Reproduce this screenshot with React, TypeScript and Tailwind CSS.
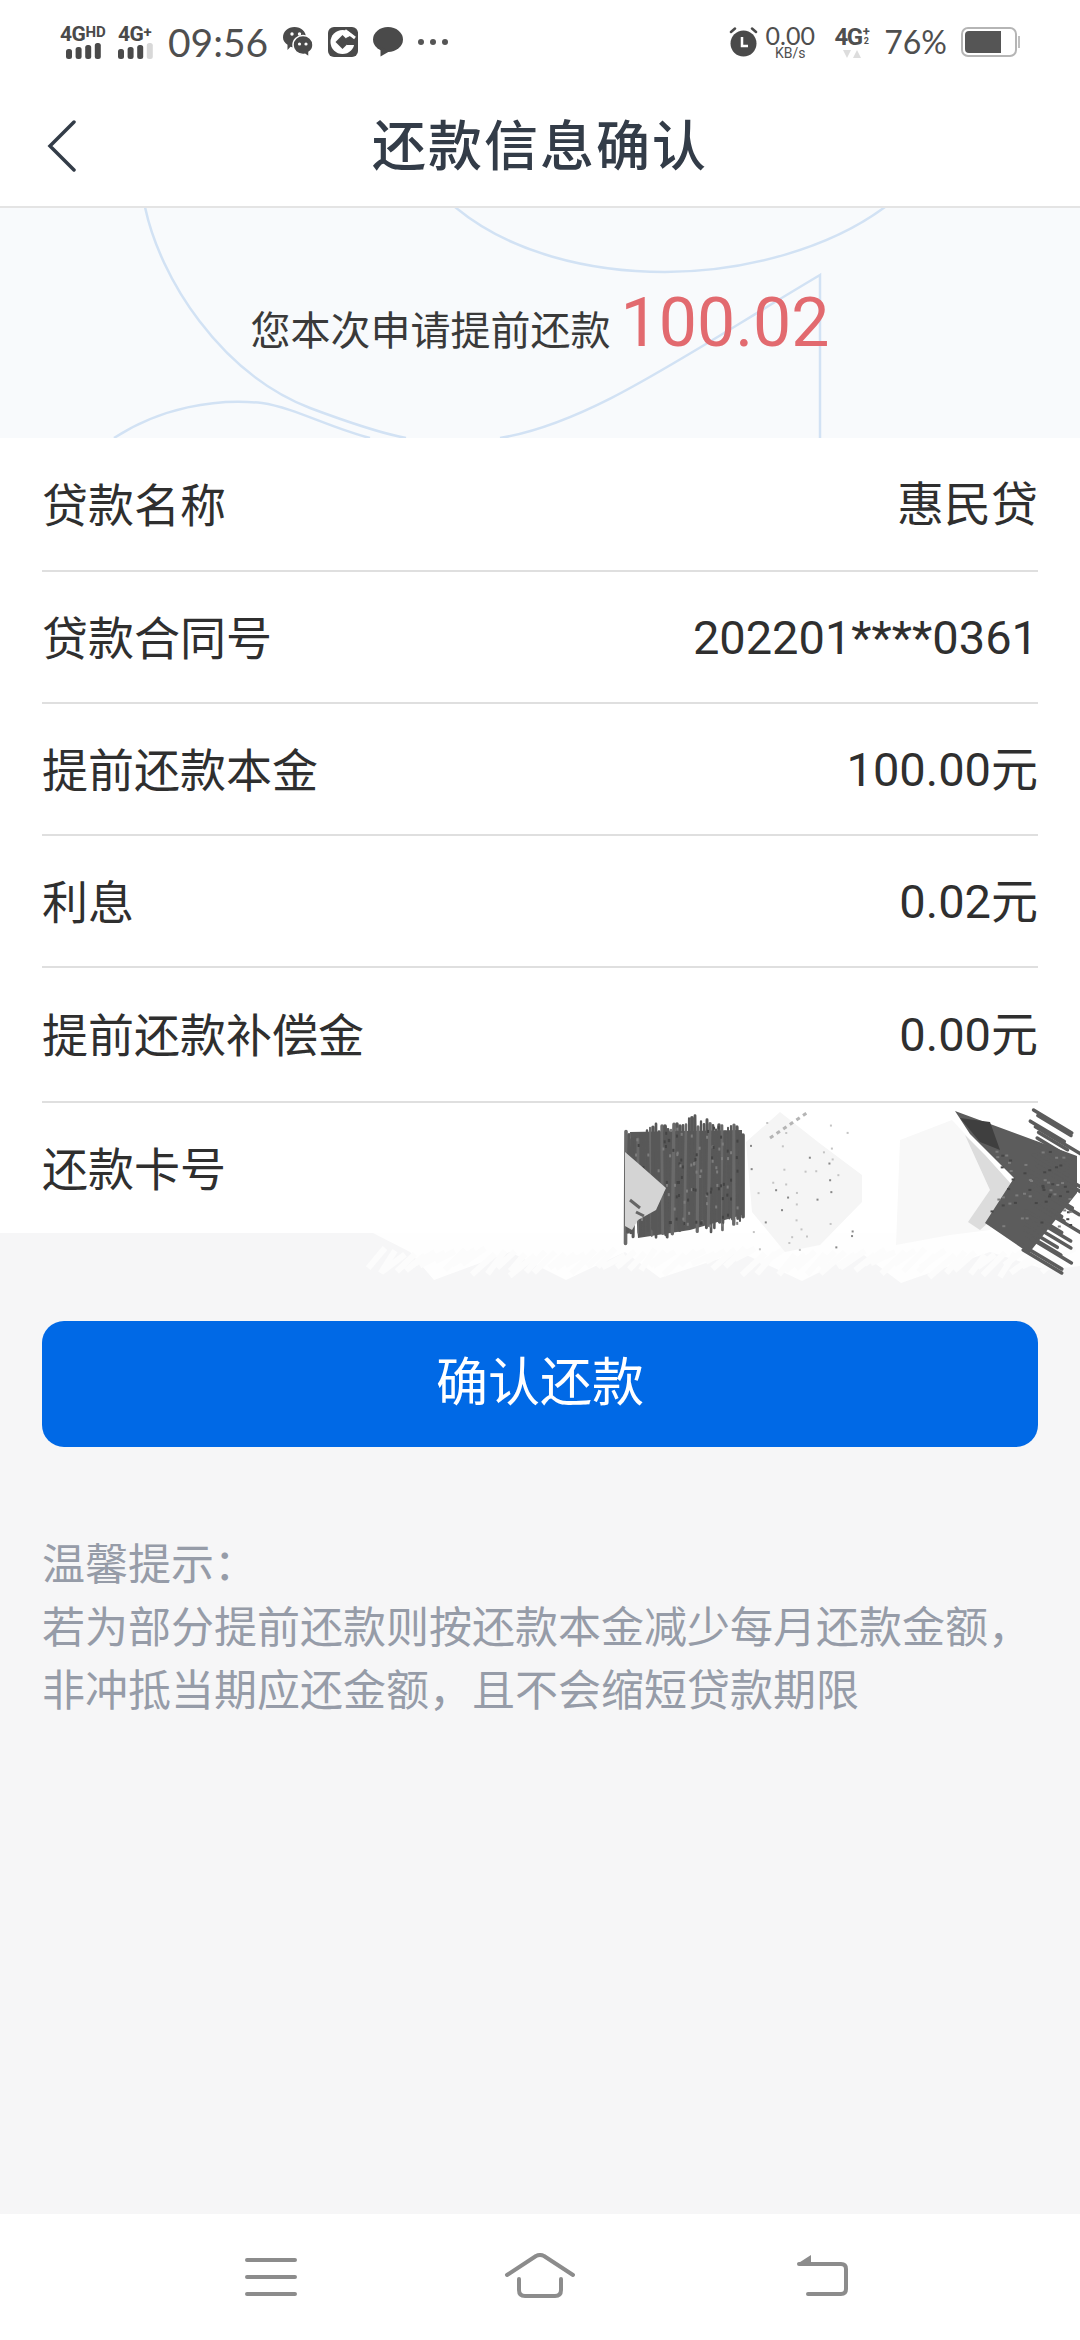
const cjk = { fontFamily: '"Noto Sans CJK SC", "Noto Sans", sans-serif' }
const num = { fontFamily: 'Roboto, "Noto Sans CJK SC", sans-serif' }
const lato = { fontFamily: 'Lato, sans-serif' }

function Signal({ level, width }: { level: number; width: number }) {
  const heights = [10, 12, 14, 16]
  return (
    <svg width={width} height="16" viewBox={`0 0 ${width} 16`}>
      {heights.map((h, i) => (
        <rect key={i} x={i * 9.6} y={16 - h} width="6" height={h} rx="2.5" fill={i < level ? '#4a4a4a' : '#d8d8d8'} />
      ))}
    </svg>
  )
}

function NetworkBadge({ suffix, level, className }: { suffix: string; level: number; className: string }) {
  return (
    <div className={`flex flex-col font-bold leading-none text-[#4a4a4a] ${className}`} style={{ fontFamily: 'Roboto, sans-serif' }}>
      <div className="flex h-[17px] items-start whitespace-nowrap">
        <span className="text-[21px] leading-[17px] tracking-[-0.5px]">4G</span>
        <span className="text-[15px] leading-[12px]">{suffix}</span>
      </div>
      <div className="flex justify-center">
        <Signal level={level} width={35} />
      </div>
    </div>
  )
}

function StatusBar() {
  return (
    <div className="flex h-[80px] items-center justify-between pt-[4px] pl-[60px] pr-[60px] text-[#4f4f4f]" style={lato}>
      <div className="flex items-center">
        <NetworkBadge suffix="HD" level={4} className="w-[46px]" />
        <NetworkBadge suffix="+" level={3} className="ml-[12px] w-[35px]" />
        <span className="ml-[15px] text-[39px] leading-[40px]">09:56</span>
        <svg className="ml-[15px]" width="30" height="30" viewBox="0 0 30 30">
          <path d="M11.5 0 C18 0 23 4.5 23 10.5 C23 16 18 20.5 11.5 20.5 C10 20.5 8.5 20.2 7.5 19.8 L4.5 23 L4.5 17.8 C1.8 16 0 13.5 0 10.5 C0 4.5 5 0 11.5 0 Z" fill="#4a4a4a" />
          <circle cx="9" cy="7" r="1.7" fill="#fff" />
          <circle cx="16.5" cy="7" r="1.7" fill="#fff" />
          <path d="M20 8.5 C25.5 8.5 30 12.5 30 18 C30 21 28.5 23.5 26 25.2 L26 30 L22 27.3 C21.3 27.5 20.7 27.5 20 27.5 C14.5 27.5 10 23.5 10 18 C10 12.5 14.5 8.5 20 8.5 Z" fill="#4a4a4a" stroke="#fff" strokeWidth="1.5" />
          <circle cx="16.5" cy="17" r="1.6" fill="#fff" />
          <circle cx="23" cy="17" r="1.6" fill="#fff" />
        </svg>
        <svg className="ml-[15px]" width="30" height="30" viewBox="0 0 30 30">
          <rect width="30" height="30" rx="6" fill="#4a4a4a" />
          <circle cx="14.5" cy="15" r="12" fill="#fff" />
          <path d="M14.5 8 L21.5 15 L14.5 22 L7.5 15 Z" fill="#4a4a4a" />
          <path d="M18 11 L30 5 V18 L19 18 Z" fill="#4a4a4a" />
          <path d="M17 3.5 L27 11" stroke="#fff" strokeWidth="3" />
        </svg>
        <svg className="ml-[15px]" width="30" height="30" viewBox="0 0 30 30">
          <ellipse cx="15" cy="12.5" rx="15" ry="12.5" fill="#4a4a4a" />
          <path d="M7.5 20 L7.5 29.5 L17 24 Z" fill="#4a4a4a" />
        </svg>
        <div className="ml-[15px] flex gap-[6px]">
          <div className="size-[6px] rounded-full bg-[#555555]" />
          <div className="size-[6px] rounded-full bg-[#555555]" />
          <div className="size-[6px] rounded-full bg-[#555555]" />
        </div>
      </div>
      <div className="flex items-center">
        <svg width="29" height="30" viewBox="0 0 29 30">
          <path d="M2 5 L6 1.5 M27 5 L23 1.5" stroke="#4a4a4a" strokeWidth="2.5" strokeLinecap="round" />
          <circle cx="14.5" cy="16.5" r="13" fill="#4a4a4a" />
          <path d="M13 10 V19 H19" fill="none" stroke="#fff" strokeWidth="2.5" />
        </svg>
        <div className="ml-[7px] flex w-[50px] flex-col items-center">
          <span className="text-[25px] leading-[21px]">0.00</span>
          <span className="text-[14px] leading-[14px]" style={{ fontFamily: 'Roboto, sans-serif' }}>KB/s</span>
        </div>
        <div className="ml-[19px] flex w-[36px] flex-col items-center" style={{ fontFamily: 'Roboto, sans-serif' }}>
          <div className="flex h-[20px] items-center whitespace-nowrap font-bold">
            <span className="text-[24px] leading-[20px] tracking-[-1.5px]">4G</span>
            <div className="ml-[1px] flex flex-col items-center">
              <span className="text-[13px] leading-[10px]">+</span>
              <span className="text-[9px] leading-[9px]">2</span>
            </div>
          </div>
          <svg width="18" height="8" viewBox="0 0 18 8" className="mt-[3px]">
            <path d="M0 0 H8 L4 8 Z M10 8 H18 L14 0 Z" fill="#dddddd" />
          </svg>
        </div>
        <span className="ml-[14px] text-[32px] leading-[34px]">76%</span>
        <div className="ml-[14px] flex items-center">
          <div className="h-[30px] w-[56px] rounded-[7px] border-2 border-[#b5b5b5] p-[2px]">
            <div className="h-full w-[36px] rounded-l-[4px] bg-[#555555]" />
          </div>
          <div className="ml-[1px] h-[12px] w-[2px] bg-[#c0c0c0]" />
        </div>
      </div>
    </div>
  )
}

function NavBar() {
  return (
    <div className="relative flex h-[128px] items-center justify-center border-b-2 border-[#e4e4e4] bg-white">
      <svg className="absolute top-[40px] left-[47px]" width="30" height="52" viewBox="0 0 30 52">
        <path d="M27 2 L3 26 L27 50" fill="none" stroke="#333c48" strokeWidth="3.5" strokeLinecap="round" />
      </svg>
      <span className="text-[54px] font-medium leading-none text-[#333c48] tracking-[2px]" style={cjk}>还款信息确认</span>
    </div>
  )
}

function Banner() {
  return (
    <div className="relative flex h-[230px] items-center justify-center overflow-hidden bg-[#f8fafc]">
      <svg className="absolute inset-0" width="1080" height="230" viewBox="0 0 1080 230" fill="none" stroke="#d2e2f4" strokeWidth="2.5">
        <path d="M145 -1 C160 70 220 165 310 200 C350 215 380 225 406 230" />
        <path d="M114 230 C160 200 215 190 262 195 C295 200 330 220 370 230" />
        <path d="M500 230 C590 215 680 150 820 67 L820 230" />
        <path d="M455 -1 C510 45 590 64 665 64 C745 64 830 40 885 -1" />
      </svg>
      <div className="relative flex items-center">
        <span className="pt-[10px] text-[40px] leading-none text-[#3a3a3a]" style={cjk}>您本次申请提前还款</span>
        <span className="ml-[10px] text-[68px] leading-none text-[#e26a6f]" style={{ fontFamily: 'Roboto, sans-serif' }}>100.02</span>
      </div>
    </div>
  )
}

type RowProps = { label: string; value?: string; className: string }

function Row({ label, value, className }: RowProps) {
  return (
    <div className={`flex items-center justify-between ${className}`}>
      <span className="pb-[5px] text-[46px] leading-none text-[#2f2f2f]" style={cjk}>{label}</span>
      {value && <span className="text-[47px] leading-none text-[#2f2f2f]" style={num}>{value}</span>}
    </div>
  )
}

// Painted-over card number, drawn as pencil strokes
function rand(seed: number) {
  const x = Math.sin(seed * 127.1) * 43758.5453
  return x - Math.floor(x)
}

const range = (n: number) => Array.from({ length: n }, (_, i) => i)

function Scribble() {
  return (
    <svg className="absolute top-[1080px] right-0" width="740" height="210" viewBox="0 0 740 210">
      {/* white paint over the grey page */}
      <path d="M33 153 L740 153 L740 186 L707 190 L650 172 L561 203 L520 172 L462 201 L400 172 L320 198 L285 172 L226 200 L170 172 L94 200 L70 172 Z" fill="#fefefe" />
      {range(70).map((i) => (
        <path key={i} d={`M${45 + i * 10} ${168 + rand(i) * 8} l-${14 + rand(i + 9) * 12} ${10 + rand(i + 3) * 14}`} stroke="#fcfcfc" strokeWidth="6" />
      ))}
      {/* left dark block */}
      <path d="M290 52 L402 50 L402 135 L350 150 L298 158 Z" fill="#5a5a5a" />
      {range(40).map((i) => {
        const x = 286 + i * 3
        const top = 34 + Math.abs(i - 22) * 0.8 + rand(i) * 12
        const bottom = 164 - i * 0.4 - rand(i + 40) * 14
        return <path key={i} d={`M${x} ${top} L${x + rand(i + 7) * 4 - 2} ${bottom}`} stroke={i % 4 === 0 ? '#6a6a6a' : '#585858'} strokeWidth={2 + rand(i + 2) * 2} strokeLinecap="round" />
      })}
      {range(120).map((i) => (
        <rect key={i} x={292 + rand(i + 200) * 108} y={45 + rand(i + 300) * 100} width="2" height="3" fill={i % 2 ? '#7d7d7d' : '#444444'} />
      ))}
      <path d="M285 72 L300 85 L326 108 L316 130 L298 140 L292 150 L285 146 Z" fill="#d4d4d4" />
      <path d="M290 120 L300 128 M296 132 L304 136" stroke="#666666" strokeWidth="3" />
      {/* middle light patch */}
      <path d="M406 62 L440 32 L478 62 L522 95 L522 122 L480 165 L445 172 L412 132 Z" fill="#f5f5f5" />
      {range(40).map((i) => (
        <rect key={i} x={410 + rand(i) * 108} y={40 + rand(i + 50) * 130} width="2" height="2" fill={i % 3 ? '#c4c4c4' : '#888888'} />
      ))}
      <path d="M430 58 L468 32" stroke="#b5b5b5" strokeWidth="3" strokeDasharray="4 4" />
      {/* right patch */}
      <path d="M560 60 L612 40 L672 105 L650 150 L610 155 L556 165 Z" fill="#f8f8f8" />
      <path d="M625 55 L645 75 L672 105 L668 125 L640 150 L628 142 L650 110 Z" fill="#dcdcdc" />
      <path d="M615 31 L737 76 L737 113 L689 173 L645 143 L674 98 L630 54 Z" fill="#5c5c5c" />
      {range(26).map((i) => {
        const t = i / 25
        const y = 30 + t * 140
        const x = 690 + rand(i + 70) * 12 - t * 10
        const len = 28 + rand(i + 90) * 22
        return <path key={i} d={`M${x} ${y} l${len} ${len * 0.6}`} stroke="#5c5c5c" strokeWidth="3.5" strokeLinecap="round" />
      })}
      {range(60).map((i) => (
        <rect key={i} x={650 + rand(i + 400) * 80} y={70 + rand(i + 500) * 80} width="3" height="2" fill={i % 2 ? '#7d7d7d' : '#464646'} />
      ))}
      <path d="M620 38 L650 42 L660 70 L640 62 Z" fill="#3f3f3f" />
    </svg>
  )
}

function Notice() {
  return (
    <div className="mt-[83px] px-[42px] text-[43px] leading-[63px] text-[#969ca8]" style={cjk}>
      <p>温馨提示：</p>
      <p className="whitespace-nowrap">若为部分提前还款则按还款本金减少每月还款金额，</p>
      <p className="whitespace-nowrap">非冲抵当期应还金额，且不会缩短贷款期限</p>
    </div>
  )
}

function SystemNav() {
  return (
    <div className="relative h-[126px] bg-white">
      <svg className="absolute top-[44px] left-[245px]" width="52" height="38" viewBox="0 0 52 38" fill="none" stroke="#8c8c8c" strokeWidth="4" strokeLinecap="round">
        <path d="M2 2 H50 M2 19 H50 M2 36 H50" />
      </svg>
      <svg className="absolute top-[39px] left-[504px]" width="72" height="46" viewBox="0 0 72 46" fill="none" stroke="#8c8c8c" strokeWidth="4" strokeLinecap="round" strokeLinejoin="round">
        <path d="M3 22 L32 3 Q36 1 40 3 L69 22" />
        <path d="M15 26 V37 Q15 43 21 43 H51 Q57 43 57 37 V26" />
      </svg>
      <svg className="absolute top-[39px] left-[796px]" width="56" height="46" viewBox="0 0 56 46" fill="none" stroke="#8c8c8c" strokeWidth="4" strokeLinecap="round" strokeLinejoin="round">
        <path d="M3 11 H45 Q50 11 50 16 V36 Q50 41 45 41 H12" />
        <path d="M1 11 L15 2 V12 Z" fill="#8c8c8c" stroke="none" />
      </svg>
    </div>
  )
}

export default function App() {
  return (
    <div className="relative flex h-[2340px] w-[1080px] flex-col overflow-hidden bg-[#f6f6f7]">
      <div className="bg-white">
        <StatusBar />
        <NavBar />
      </div>
      <Banner />
      <div className="bg-white px-[42px]">
        <Row label="贷款名称" value="惠民贷" className="h-[134px] border-b-2 border-[#dfdfdf]" />
        <Row label="贷款合同号" value="202201****0361" className="h-[132px] border-b-2 border-[#dfdfdf]" />
        <Row label="提前还款本金" value="100.00元" className="h-[132px] border-b-2 border-[#dfdfdf]" />
        <Row label="利息" value="0.02元" className="h-[132px] border-b-2 border-[#dfdfdf]" />
        <Row label="提前还款补偿金" value="0.00元" className="h-[135px] border-b-2 border-[#dfdfdf]" />
        <Row label="还款卡号" className="h-[130px]" />
      </div>
      <Scribble />
      <button className="mx-[42px] mt-[88px] h-[126px] rounded-[22px] bg-[#0069e6] pb-[10px] text-[52px] text-white" style={cjk}>确认还款</button>
      <Notice />
      <div className="flex-1" />
      <SystemNav />
    </div>
  )
}
